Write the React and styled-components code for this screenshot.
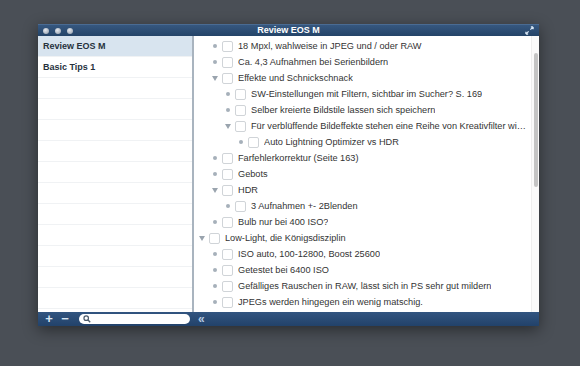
import styled, { createGlobalStyle } from "styled-components";

const GlobalStyle = createGlobalStyle`
  html, body {
    margin: 0;
    padding: 0;
    background: #4a4f56;
    font-family: "Liberation Sans", Arial, sans-serif;
  }
  #root {
    width: 580px;
    height: 366px;
    overflow: hidden;
  }
`;

const items = [
  { level: 2, marker: "dot", text: "18 Mpxl, wahlweise in JPEG und / oder RAW" },
  { level: 2, marker: "dot", text: "Ca. 4,3 Aufnahmen bei Serienbildern" },
  { level: 2, marker: "open", text: "Effekte und Schnickschnack" },
  { level: 3, marker: "dot", text: "SW-Einstellungen mit Filtern, sichtbar im Sucher? S. 169" },
  { level: 3, marker: "dot", text: "Selber kreierte Bildstile lassen sich speichern" },
  { level: 3, marker: "open", text: "Für verblüffende Bildeffekte stehen eine Reihe von Kreativfilter wie Fischauge, Miniatur und Spielzeugkamera" },
  { level: 4, marker: "dot", text: "Auto Lightning Optimizer vs HDR" },
  { level: 2, marker: "dot", text: "Farfehlerkorrektur (Seite 163)" },
  { level: 2, marker: "dot", text: "Gebots" },
  { level: 2, marker: "open", text: "HDR" },
  { level: 3, marker: "dot", text: "3 Aufnahmen +- 2Blenden" },
  { level: 2, marker: "dot", text: "Bulb nur bei 400 ISO?" },
  { level: 1, marker: "open", text: "Low-Light, die Königsdisziplin" },
  { level: 2, marker: "dot", text: "ISO auto, 100-12800, Boost 25600" },
  { level: 2, marker: "dot", text: "Getestet bei 6400 ISO" },
  { level: 2, marker: "dot", text: "Gefälliges Rauschen in RAW, lässt sich in PS sehr gut mildern" },
  { level: 2, marker: "dot", text: "JPEGs werden hingegen ein wenig matschig." },
];

const docs = ["Review EOS M", "Basic Tips 1"];

export default function App() {
  return (
    <>
      <GlobalStyle />
      <Window>
        <TitleBar>
          <Lights>
            <Light />
            <Light />
            <Light />
          </Lights>
          <Title>Review EOS M</Title>
          <ResizeIcon viewBox="0 0 10 10">
            <path d="M1 9 L4 6 M1 9 L1 6.5 M1 9 L3.5 9" stroke="#d8e6f4" strokeWidth="1.4" fill="none" />
            <path d="M9 1 L6 4 M9 1 L9 3.5 M9 1 L6.5 1" stroke="#d8e6f4" strokeWidth="1.4" fill="none" />
          </ResizeIcon>
        </TitleBar>
        <Body>
          <Sidebar>
            {docs.map((d, i) => (
              <DocRow key={d} $selected={i === 0}>
                {d}
              </DocRow>
            ))}
            {Array.from({ length: 11 }).map((_, i) => (
              <DocRow key={i} />
            ))}
          </Sidebar>
          <Main>
            <Outline>
              {items.map((item, i) => (
                <Row key={i} $level={item.level}>
                  <Marker>
                    {item.marker === "dot" ? <Dot /> : <Triangle />}
                  </Marker>
                  <Check />
                  <RowText>{item.text}</RowText>
                </Row>
              ))}
            </Outline>
            <ScrollTrack>
              <Thumb />
            </ScrollTrack>
          </Main>
        </Body>
        <BottomBar>
          <Tools>
            <ToolGlyph>+</ToolGlyph>
            <ToolGlyph>−</ToolGlyph>
            <Search>
              <svg width="8" height="8" viewBox="0 0 10 10">
                <circle cx="4" cy="4" r="2.8" stroke="#4b5a6a" strokeWidth="1.5" fill="none" />
                <path d="M6 6 L9 9" stroke="#4b5a6a" strokeWidth="1.7" />
              </svg>
            </Search>
          </Tools>
          <Collapse>«</Collapse>
        </BottomBar>
      </Window>
    </>
  );
}

const Window = styled.div`
  margin: 24px 0 0 38px;
  width: 501px;
  height: 302px;
  display: flex;
  flex-direction: column;
  background: #fff;
  box-shadow: 0 4px 14px rgba(0, 0, 0, 0.45);
`;

const TitleBar = styled.div`
  height: 12px;
  flex: none;
  display: flex;
  align-items: center;
  justify-content: space-between;
  padding: 0 5px;
  background: linear-gradient(#36577f, #244468);
  border-top: 1px solid #4a6b92;
  box-sizing: border-box;
`;

const Lights = styled.div`
  display: flex;
  gap: 6px;
  width: 60px;
`;

const Light = styled.span`
  width: 6px;
  height: 6px;
  border-radius: 50%;
  background: radial-gradient(circle at 40% 35%, #e4e8ee, #8e9aa8);
`;

const Title = styled.div`
  color: #fff;
  font-size: 9px;
  font-weight: bold;
  line-height: 11px;
  margin-left: 22px;
`;

const ResizeIcon = styled.svg`
  width: 9px;
  height: 9px;
  margin-left: 73px;
`;

const Body = styled.div`
  flex: 1;
  display: flex;
  min-height: 0;
`;

const Sidebar = styled.div`
  width: 154px;
  flex: none;
  border-right: 2px solid #a9b4bf;
  overflow: hidden;
  background: #fff;
`;

const DocRow = styled.div`
  height: 20px;
  line-height: 20px;
  padding-left: 5px;
  border-bottom: 1px solid #f0f2f4;
  background: ${(p) => (p.$selected ? "#d8e4ef" : "#fff")};
  color: #27323d;
  font-size: 9px;
  font-weight: bold;
`;

const Main = styled.div`
  flex: 1;
  display: flex;
  min-width: 0;
`;

const Outline = styled.div`
  flex: 1;
  min-width: 0;
  padding-top: 2px;
  overflow: hidden;
`;

const Row = styled.div`
  height: 16px;
  display: flex;
  align-items: center;
  padding-left: ${(p) => 2 + (p.$level - 1) * 13}px;
  padding-right: 4px;
`;

const Marker = styled.span`
  width: 12px;
  flex: none;
  display: flex;
  justify-content: center;
  align-items: center;
`;

const Dot = styled.span`
  width: 4px;
  height: 4px;
  border-radius: 50%;
  background: #a6b0ba;
`;

const Triangle = styled.span`
  width: 0;
  height: 0;
  border-left: 3.5px solid transparent;
  border-right: 3.5px solid transparent;
  border-top: 5px solid #9aa4ae;
`;

const Check = styled.span`
  width: 9px;
  height: 9px;
  flex: none;
  margin-left: 1px;
  border: 1px solid #d0d4d8;
  border-radius: 2px;
  background: #fff;
`;

const RowText = styled.span`
  margin-left: 5px;
  font-size: 9.2px;
  color: #333;
  white-space: nowrap;
  overflow: hidden;
  text-overflow: ellipsis;
`;

const ScrollTrack = styled.div`
  width: 8px;
  flex: none;
  padding: 17px 1px 0 2px;
  box-sizing: border-box;
  background: #fafafa;
  border-left: 1px solid #eeeeee;
`;

const Thumb = styled.div`
  height: 134px;
  border-radius: 3px;
  background: #c4c4c4;
`;

const BottomBar = styled.div`
  height: 14px;
  flex: none;
  display: flex;
  align-items: center;
  background: linear-gradient(#325580, #22426a);
`;

const Tools = styled.div`
  width: 156px;
  display: flex;
  align-items: center;
  padding-left: 5px;
  box-sizing: border-box;
`;

const ToolGlyph = styled.span`
  width: 12px;
  margin-right: 4px;
  text-align: center;
  color: #d9e6f3;
  font-size: 13px;
  font-weight: bold;
  line-height: 14px;
`;

const Search = styled.div`
  width: 111px;
  height: 10px;
  margin-left: 4px;
  border-radius: 6px;
  background: #fff;
  display: flex;
  align-items: center;
  padding-left: 4px;
  box-sizing: border-box;
`;

const Collapse = styled.span`
  margin-left: 4px;
  color: #b6cbe2;
  font-size: 12px;
  font-weight: bold;
  line-height: 14px;
`;
